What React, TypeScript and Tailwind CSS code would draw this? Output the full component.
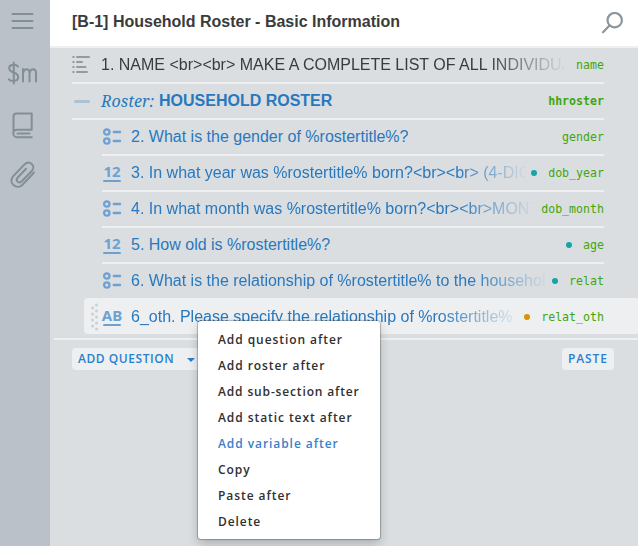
import type { ReactNode } from "react";
import clsx from "clsx";

type Kind = "radio" | "number" | "text";

const OptionsIcon = () => (
  <svg width="19" height="18" viewBox="0 0 19 18" fill="none" stroke="#6ea1d2">
    <circle cx="3.8" cy="4" r="2.7" strokeWidth="2.3" />
    <circle cx="3.8" cy="13" r="2.7" strokeWidth="2.3" />
    <path d="M10.7 4h6.4M10.7 13h6.4" strokeWidth="2.3" strokeLinecap="round" />
  </svg>
);

const GlyphIcon = ({ label }: { label: string }) => (
  <div className="flex h-[18px] w-[18px] flex-col items-center">
    <div className="h-[16px] font-['Noto_Sans',sans-serif] text-[15px] leading-[15px] font-bold text-[#6ea1d2]">
      {label}
    </div>
    <div className="h-[2px] w-[18px] shrink-0 rounded-full bg-[#6ea1d2]" />
  </div>
);

const ListIcon = () => (
  <svg width="18" height="18" viewBox="0 0 18 18" fill="none" stroke="#919ba2" strokeWidth="2" strokeLinecap="round">
    <path d="M1.2 2h.5M5 2h12M1.2 7h.5M5 7h5M1.2 12h.5M5 12h8.5M1.2 17h.5M5 17h10" />
  </svg>
);

const Grip = () => (
  <svg width="8" height="28" viewBox="0 0 8 28" fill="#c8d0d7">
    {[2, 8, 14, 20, 26].map((y) => (
      <circle key={y} cx="6.5" cy={y} r="1.5" />
    ))}
    {[5, 11, 17, 23].map((y) => (
      <circle key={y} cx="2.5" cy={y} r="1.5" />
    ))}
  </svg>
);

const Variable = ({ name, dot, bold }: { name: string; dot?: string; bold?: boolean }) => (
  <div className="flex shrink-0 items-center">
    {dot && <span className={clsx("mr-[11px] h-[6px] w-[6px] rounded-full", dot)} />}
    <span
      className={clsx(
        "font-['DejaVu_Sans_Mono',monospace] text-[11.6px] leading-4 text-[#3fa60d]",
        bold && "font-bold",
      )}
    >
      {name}
    </span>
  </div>
);

const Title = ({ children, fade, dark }: { children: ReactNode; fade?: string; dark?: boolean }) => (
  <div
    className={clsx(
      "overflow-hidden font-['Liberation_Sans',sans-serif] text-[16px] leading-[34px] whitespace-nowrap",
      dark ? "text-[#3b3b3b]" : "text-[#2878be]",
      fade,
    )}
  >
    {children}
  </div>
);

const questions: { kind: Kind; title: string; name: string; dot?: string; width?: string }[] = [
  { kind: "radio", title: "2. What is the gender of %rostertitle%?", name: "gender" },
  {
    kind: "number",
    title: "3. In what year was %rostertitle% born?<br><br> (4-DIG",
    name: "dob_year",
    dot: "bg-[#14a6a6]",
    width: "w-[395px] [mask-image:linear-gradient(to_right,#000_325px,transparent_397px)]",
  },
  {
    kind: "radio",
    title: "4. In what month was %rostertitle% born?<br><br>MONT",
    name: "dob_month",
    width: "w-[401px] [mask-image:linear-gradient(to_right,#000_325px,transparent_405px)]",
  },
  { kind: "number", title: "5. How old is %rostertitle%?", name: "age", dot: "bg-[#14a6a6]" },
  {
    kind: "radio",
    title: "6. What is the relationship of %rostertitle% to the househol",
    name: "relat",
    dot: "bg-[#14a6a6]",
    width: "w-[415px] [mask-image:linear-gradient(to_right,#000_340px,transparent_418px)]",
  },
];

const menuItems = [
  { label: "Add question after" },
  { label: "Add roster after" },
  { label: "Add sub-section after", tight: true },
  { label: "Add static text after" },
  { label: "Add variable after", active: true },
  { label: "Copy" },
  { label: "Paste after" },
  { label: "Delete" },
];

const Sidebar = () => (
  <aside className="flex w-[50px] shrink-0 flex-col bg-[#bac1c9] text-[#848e96]">
    <svg width="50" height="200" viewBox="0 0 50 200" fill="none" stroke="currentColor" strokeWidth="2" strokeLinecap="round" strokeLinejoin="round">
      <path d="M12.5 14h20M12.5 21h20M12.5 28h20" />
      <path d="M18 66.5c-1-1.2-2.5-1.8-4.2-1.8-3 0-4.6 1.3-4.6 3.6 0 5.2 9 3.2 9 8.5 0 2.6-2 4.2-4.8 4.2-2 0-3.8-.6-4.6-1.7M13.8 62.5v21" />
      <path d="M23 69v12.5M23 73c.5-2.5 1.8-3.8 3.5-3.8 2 0 3 1.3 3 4v8.3M29.5 73c.5-2.5 1.8-3.8 3.5-3.8 2 0 3 1.3 3 4v8.3" />
      <path d="M16.5 113.5h15.2v16.2H17a3.7 3.7 0 0 0 0 7.5h14.8M16.5 113.5c-2 0-3 1.3-3 3V133M17.5 133.5h12" />
      <path d="M34 172.5 22.5 184.8c-5.5 5.5-14.5-1.4-9.7-8.2l11.7-12.2c5-4.8 11.7 1.6 7.5 6.4L21.5 181.5c-3 2.5-6.2-1-4-3.7l8.5-9" />
    </svg>
  </aside>
);

export default function App() {
  return (
    <div className="relative flex h-[546px] w-[638px] overflow-hidden bg-[#dadee1]">
      <Sidebar />
      <main className="flex min-w-0 flex-1 flex-col">
        <header className="flex h-12 shrink-0 items-center justify-between border-b-2 border-[#edeff1] bg-white pr-[14px] pl-[22px]">
          <h1 className="pb-[3px] font-['Liberation_Sans',sans-serif] text-[16px] font-bold text-[#3b3b3b]">
            [B-1] Household Roster - Basic Information
          </h1>
          <svg width="23" height="23" viewBox="0 0 23 23" fill="none" stroke="#8b959c" strokeWidth="2.2" strokeLinecap="round">
            <circle cx="13.7" cy="8.2" r="7.2" />
            <path d="M8.5 13.5 2 20.3" />
          </svg>
        </header>

        <div className="ml-[22px] flex h-9 w-[532px] items-center justify-between border-b-2 border-[#edeff1]">
          <div className="flex items-center">
            <div className="-mt-[2px]">
              <ListIcon />
            </div>
            <div className="ml-[11px]">
              <Title dark fade="w-[463px] [mask-image:linear-gradient(to_right,#000_385px,transparent_466px)]">
                1. NAME &lt;br&gt;&lt;br&gt; MAKE A COMPLETE LIST OF ALL INDIVIDUA
              </Title>
            </div>
          </div>
          <Variable name="name" />
        </div>

        <div className="ml-[22px] flex h-9 w-[532px] items-center justify-between border-b-2 border-[#edeff1]">
          <div className="flex items-center">
            <span className="mt-[1px] ml-[2px] h-[3px] w-4 rounded-full bg-[#abc2d2]" />
            <div className="ml-[11px] flex items-center leading-[34px] text-[#2878be]">
              <span className="w-[58px] font-['Noto_Serif','DejaVu_Serif_Condensed','DejaVu_Serif',serif] text-[16px] leading-[32px] italic">
                Roster:
              </span>
              <span className="font-['Liberation_Sans',sans-serif] text-[16px] font-bold">HOUSEHOLD ROSTER</span>
            </div>
          </div>
          <Variable name="hhroster" bold />
        </div>

        {questions.map((q, i) => (
          <div
            key={q.name}
            className={clsx(
              "ml-[52px] flex h-9 w-[502px] items-center justify-between border-b-2",
              i === questions.length - 1 ? "border-transparent" : "border-[#edeff1]",
            )}
          >
            <div className="flex items-center">
              <div className="flex w-[29px] pl-[1px]">
                {q.kind === "radio" ? <OptionsIcon /> : <GlyphIcon label="12" />}
              </div>
              <Title fade={q.width}>{q.title}</Title>
            </div>
            <Variable name={q.name} dot={q.dot} />
          </div>
        ))}

        <div className="-mt-[2px] ml-[34px] flex h-9 items-center justify-between rounded-l bg-[#edeff1] pt-[1px] pr-[34px] pl-[6px]">
          <div className="flex items-center">
            <Grip />
            <div className="ml-[5px] flex w-[28px]">
              <GlyphIcon label="AB" />
            </div>
            <Title fade="w-[385px] [mask-image:linear-gradient(to_right,#000_305px,transparent_392px)]">
              6_oth. Please specify the relationship of %rostertitle%
            </Title>
          </div>
          <Variable name="relat_oth" dot="bg-[#d8930a]" />
        </div>

        <div className="mt-1 ml-1 h-[2px] bg-[#edeff1]" />

        <div className="mt-2 mr-6 ml-[22px] flex justify-between font-['Open_Sans',sans-serif] text-[12px] leading-[22px] font-semibold text-[#2b7fd0]">
          <div className="flex h-[22px] w-[132px] items-center rounded bg-[#edeff1] pl-[6px]">
            <span className="w-[109px] tracking-[0.55px] whitespace-nowrap">ADD QUESTION</span>
            <svg className="mt-[2px]" width="8" height="4" viewBox="0 0 8 4" fill="currentColor">
              <path d="M0 0h8L4 4z" />
            </svg>
          </div>
          <div className="h-[22px] w-[52px] rounded bg-[#edeff1] pl-[6px] tracking-[0.9px]">PASTE</div>
        </div>
      </main>

      <div className="absolute top-[321px] left-[198px] h-[218px] w-[182px] rounded-[3px] bg-white pt-[6px] pl-5 font-['Open_Sans',sans-serif] text-[12px] font-semibold text-[#303030] shadow-[0_0_1px_1px_rgba(0,0,0,0.25),0_5px_11px_rgba(0,0,0,0.2)]">
        {menuItems.map((item) => (
          <div
            key={item.label}
            className={clsx(
              "h-[26px] leading-[26px] whitespace-nowrap",
              item.tight ? "tracking-[0.85px]" : "tracking-[0.93px]",
              item.active && "text-[#3a80cc]",
            )}
          >
            {item.label}
          </div>
        ))}
      </div>
    </div>
  );
}
